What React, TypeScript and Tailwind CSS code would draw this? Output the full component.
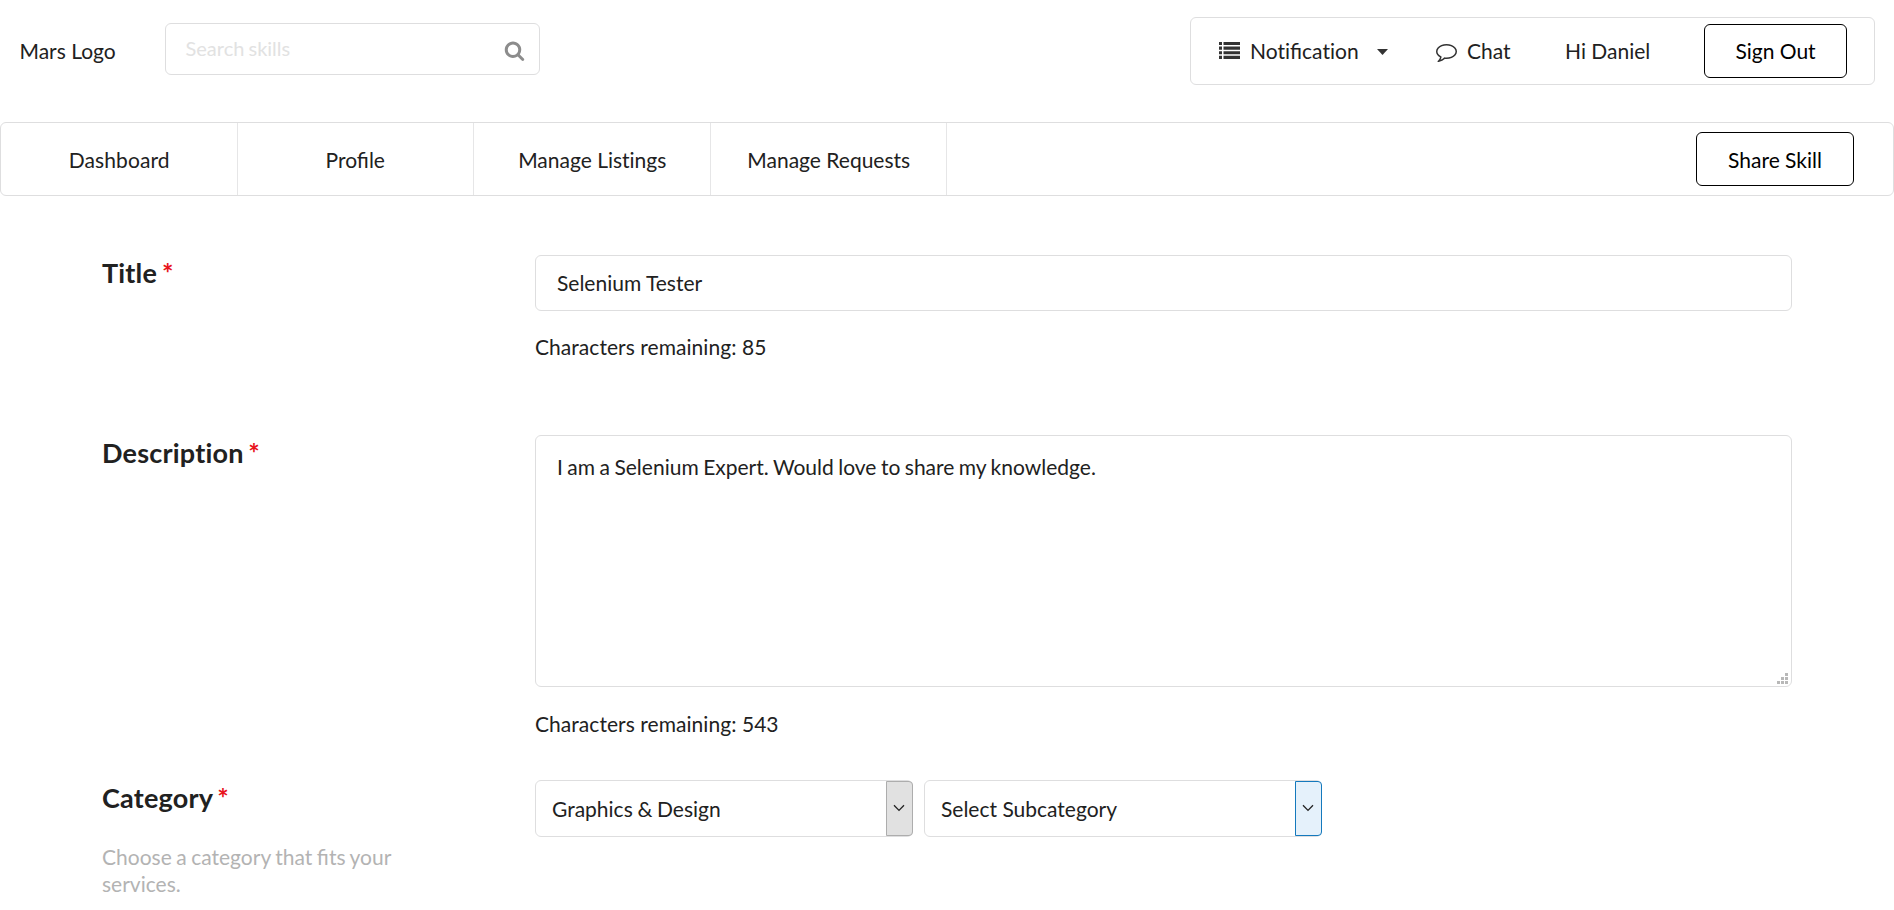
import React from "react";

function Glyph({ d, className }: { d: string; className: string }) {
  return (
    <svg viewBox="0 0 1792 1792" className={className} fill="currentColor" aria-hidden="true">
      <path d={d} />
    </svg>
  );
}

const SEARCH =
  "M1216 832q0-185-131.5-316.5t-316.5-131.5-316.5 131.5-131.5 316.5 131.5 316.5 316.5 131.5 316.5-131.5 131.5-316.5zm512 832q0 52-38 90t-90 38q-54 0-90-38l-343-342q-179 124-399 124-143 0-273.5-55.5t-225-150-150-225-55.5-273.5 55.5-273.5 150-225 225-150 273.5-55.5 273.5 55.5 225 150 150 225 55.5 273.5q0 220-124 399l343 343q37 37 37 90z";
const COMMENT =
  "M896 384q-204 0-381.5 69.5t-282 187.5-104.5 255q0 112 71.5 213.5t201.5 175.5l87 50-27 96q-24 91-70 172 152-63 275-171l43-38 57 6q69 8 130 8 204 0 381.5-69.5t282-187.5 104.5-255-104.5-255-282-187.5-381.5-69.5zm896 512q0 174-120 321.5t-326 233-450 85.5q-70 0-145-8-198 175-460 242-49 14-114 22h-5q-15 0-27-10.5t-16-27.5v-1q-3-4-.5-12t2-10 4.5-9.5l6-9 7-8.5 8-9q7-8 31-34.5t34.5-38 31-39.5 32.5-51 27-59 26-76q-157-89-247.5-220t-90.5-281q0-174 120-321.5t326-233 450-85.5 450 85.5 326 233 120 321.5z";

function ListIcon() {
  return (
    <svg viewBox="0 0 21 17" className="mb-[2px] h-[17px] w-[21px]" fill="#333" aria-hidden="true">
      <path d="M0 0h3v3.1H0zM0 4.6h3v3.1H0zM0 9.2h3v3.1H0zM0 13.8h3v3.1H0zM4.5 0H21v3.1H4.5zM4.5 4.6H21v3.1H4.5zM4.5 9.2H21v3.1H4.5zM4.5 13.8H21v3.1H4.5z" />
    </svg>
  );
}

function FieldLabel({ children }: { children: string }) {
  return (
    <h3 className="text-[27px] leading-[34px] font-bold tracking-[0.2px]">
      {children} <span className="-ml-[2px] text-[#e8131b]">*</span>
    </h3>
  );
}

function Chevron() {
  return (
    <svg viewBox="0 0 12 8" className="mr-px mb-px h-2 w-3" fill="none" stroke="#222" strokeWidth="1.3">
      <path d="M1 1.2 6 6.4 11 1.2" />
    </svg>
  );
}

function Header() {
  return (
    <header className="flex h-[122px] items-start pr-[19px] pl-[19.5px]">
      <div className="mt-[35px] w-[145.5px] leading-[32px]">Mars Logo</div>
      <div className="mt-[23px] flex h-[52px] w-[375px] items-center justify-between rounded-[6px] border border-[#dededf] pr-[14px] pl-[19.5px]">
        <span className="mb-px text-[20px] [word-spacing:-1px] text-[#e2e2e2]">Search skills</span>
        <Glyph d={SEARCH} className="mt-[3px] h-[21px] w-[21px] text-[#8c8c8c]" />
      </div>
      <div className="mt-[17px] ml-auto flex h-[68px] w-[685px] items-center rounded-[6px] border border-[#dededf] pl-7">
        <ListIcon />
        <span className="mb-[2px] ml-[10px] w-[127px]">
          <span className="[font-variant-ligatures:none]">Noti</span>fica
          <span className="[font-variant-ligatures:none]">tion</span>
        </span>
        <svg viewBox="0 0 11 6" className="mt-[2px] h-[6px] w-[11px]" fill="#333" aria-hidden="true">
          <path d="M0 0h11L5.5 6z" />
        </svg>
        <Glyph d={COMMENT} className="ml-[48px] h-[21px] w-[21px] text-[#333]" />
        <span className="mb-[2px] ml-[10px] w-[98px]">Chat</span>
        <span className="mb-[2px]">Hi Daniel</span>
        <button className="mr-[27px] ml-auto h-[54px] w-[143px] rounded-[6px] border border-black pb-[2px] text-black">Sign Out</button>
      </div>
    </header>
  );
}

function NavBar() {
  const tab = "flex h-full w-[236.5px] items-center justify-center border-r border-[#e6e6e7]";
  return (
    <nav className="flex h-[74px] items-center rounded-[6px] border border-[#dededf]">
      <a className={`${tab} pl-px tracking-[0.1px]`}>Dashboard</a>
      <a className={tab}>Profile</a>
      <a className={`${tab} pl-px [font-variant-ligatures:none]`}>Manage Listings</a>
      <a className={`${tab} pl-px`}>Manage Requests</a>
      <button className="mr-[39px] ml-auto h-[54px] w-[158px] rounded-[6px] border border-black text-black">Share Skill</button>
    </nav>
  );
}

function ResizeGrip() {
  return (
    <svg viewBox="0 0 11 11" className="h-[11px] w-[11px]" fill="#b8b8b8" aria-hidden="true">
      <path d="M8 0h3v3H8zM4 4h3v3H4zM8 4h3v3H8zM0 8h3v3H0zM4 8h3v3H4zM8 8h3v3H8z" />
    </svg>
  );
}

export default function App() {
  return (
    <div className="h-[910px] w-[1894px] overflow-hidden bg-white font-[Lato,sans-serif] text-[21px] leading-[27px] text-[#212121]">
      <Header />
      <NavBar />
      <main className="grid grid-cols-[433px_1257px] pl-[102px]">
        <div className="h-[239px] pt-[60px]">
          <FieldLabel>Title</FieldLabel>
        </div>
        <div className="pt-[59px]">
          <div className="flex h-[56px] items-center rounded-[6px] border border-[#dededf] px-[21px] pb-px">Selenium Tester</div>
          <p className="mt-[22px] tracking-[0.05px]">Characters remaining: 85</p>
        </div>

        <div className="h-[345px] pt-px">
          <FieldLabel>Description</FieldLabel>
        </div>
        <div>
          <div className="flex h-[252px] flex-col justify-between rounded-[6px] border border-[#dededf] pt-[17px] pr-[3px] pb-[2px] pl-[21px]">
            <p className="[word-spacing:-0.9px]">I am a Selenium Expert. Would love to share my knowledge.</p>
            <div className="flex justify-end">
              <ResizeGrip />
            </div>
          </div>
          <p className="mt-[23px] tracking-[0.05px]">Characters remaining: 543</p>
        </div>

        <div className="pt-px">
          <FieldLabel>Category</FieldLabel>
          <p className="mt-[28px] w-[310px] [word-spacing:-0.85px] text-[#b3b3b3]">Choose a category that fits your services.</p>
        </div>
        <div className="flex gap-[11px]">
          <div className="flex h-[57px] w-[378px] items-center justify-between rounded-[6px] border border-[#dededf] pl-4">
            <span className="[word-spacing:-0.7px]">Graphics &amp; Design</span>
            <span className="-mr-px flex h-full w-[27px] items-center justify-center rounded-r-[4px] border border-[#adadad] bg-[#e1e1e1]">
              <Chevron />
            </span>
          </div>
          <div className="flex h-[57px] w-[398px] items-center justify-between rounded-[6px] border border-[#dededf] pl-4">
            <span>Select Subcategory</span>
            <span className="-mr-px flex h-full w-[27px] items-center justify-center rounded-r-[4px] border border-[#1479bd] bg-[#e5f1fb]">
              <Chevron />
            </span>
          </div>
        </div>
      </main>
    </div>
  );
}
